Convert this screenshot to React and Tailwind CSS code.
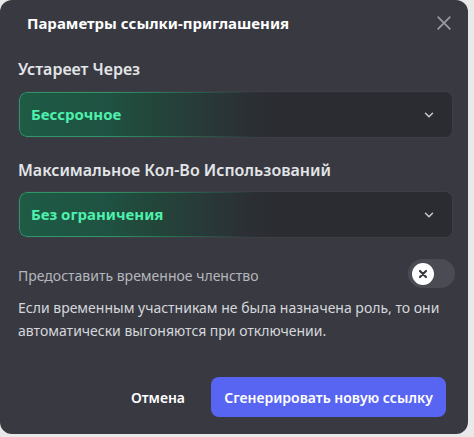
import React, { useState } from 'react';

// Invite link settings modal
const ChevronDown = () => (
  <svg width="14" height="14" viewBox="0 0 24 24" fill="none" stroke="#c4c6cc" strokeWidth="2.6" strokeLinecap="round" strokeLinejoin="round">
    <path d="M6 9l6 6 6-6" />
  </svg>
);

const CloseIcon = () => (
  <svg width="20" height="20" viewBox="0 0 24 24" fill="none" stroke="#9a9ca3" strokeWidth="2" strokeLinecap="round">
    <path d="M5 5l14 14M19 5L5 19" />
  </svg>
);

const SelectBox = ({ value }) => (
  <div className="relative h-[47px] rounded-lg border border-[#3e3f46] bg-[#2b2c32] overflow-hidden">
    <div className="absolute inset-0 rounded-lg bg-[linear-gradient(90deg,#1e5b45_0%,#1f5242_20%,#234539_32%,#283a39_42%,#2b3035_52%,#2b2c32_60%)]" />
    <div className="absolute inset-y-0 left-0 w-[240px] rounded-l-lg border-y border-l border-[#2f9468] [mask-image:linear-gradient(90deg,#000_35%,transparent_100%)]" />
    <div className="relative flex h-full items-center justify-between pl-3 pr-4">
      <span className="font-['Noto_Sans'] text-[15px] font-bold text-[#4ff0ad]">{value}</span>
      <ChevronDown />
    </div>
  </div>
);

export default function App() {
  const [temp, setTemp] = useState(false);

  return (
    <div className="h-[437px] w-[474px] bg-[#e9e9ea]">
      <div className="flex h-[434px] w-[468px] flex-col rounded-xl bg-[#393a41] font-['Noto_Sans',sans-serif]">
        <div className="flex items-center justify-between pl-[27px] pr-[10px] pt-[9px]">
          <h1 className="text-[15px] font-bold text-white">Параметры ссылки-приглашения</h1>
          <button className="p-1"><CloseIcon /></button>
        </div>

        <div className="pl-[18px] pr-[15px] pt-[20px]">
          <div className="mb-[10px] text-[16px] font-semibold text-[#e3e5e8]">Устареет Через</div>
          <SelectBox value="Бессрочное" />

          <div className="mb-[9px] mt-[20px] text-[16px] font-semibold text-[#e3e5e8]">Максимальное Кол-Во Использований</div>
          <SelectBox value="Без ограничения" />

          <div className="mt-[21px] flex items-center justify-between">
            <span className="pt-[4px] text-[14px] text-[#b5b7bd]">Предоставить временное членство</span>
            <button
              onClick={() => setTemp(!temp)}
              className="mr-[-2px] flex h-[29px] w-[47px] items-center rounded-full bg-[#4a4b53] px-[4px]"
            >
              <span className="flex h-[22px] w-[22px] items-center justify-center rounded-full bg-white">
                <svg width="10" height="10" viewBox="0 0 10 10" stroke="#393a41" strokeWidth="2.2" strokeLinecap="round">
                  <path d="M2 2l6 6M8 2L2 8" />
                </svg>
              </span>
            </button>
          </div>

          <p className="mt-[8px] text-[14px] leading-[23px] text-[#d5d7dc]">
            Если временным участникам не была назначена роль, то они автоматически выгоняются при отключении.
          </p>
        </div>

        <div className="mt-auto flex items-center justify-end gap-[26px] pb-[17px] pr-[22px]">
          <button className="text-[14px] font-semibold text-white">Отмена</button>
          <button className="h-[40px] w-[235px] rounded-lg bg-[#5865f2] text-[14px] font-semibold text-white">
            Сгенерировать новую ссылку
          </button>
        </div>
      </div>
    </div>
  );
}
